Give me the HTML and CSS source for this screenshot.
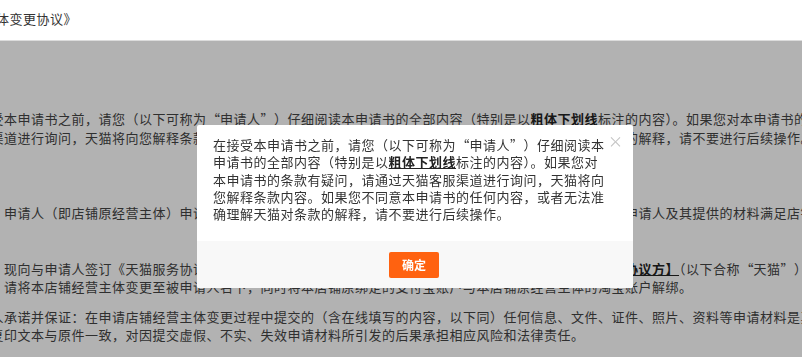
FILE: index.html
```html
<!DOCTYPE html>
<html lang="zh-CN">
<head>
    <meta charset="UTF-8">
    <meta name="viewport" content="width=device-width, initial-scale=1.0">
    <title>店铺经营主体变更</title>
    <link rel="stylesheet" href="styles.css">
</head>
<body>
    <div class="page">
        <div class="header">
            <h1 class="title">《天猫店铺经营主体变更协议》</h1>
        </div>
        <div class="doc">
            <p class="para para-intro">在接受本申请书之前，请您（以下可称为<span class="lq">“</span>申请人<span class="rq">”</span>）仔细阅读本申请书的全部内容（特别是以<b class="key">粗体下划线</b>标注的内容）。如果您对本申请书的条款有疑问，请通过天猫<br>客服渠道进行询问，天猫将向您解释条款内容。如果您不同意本申请书的任何内容，或无法准确理解天猫对条款的解释，请不要进行后续操作。</p>
            <p class="para para-apply">鉴于：申请人（即店铺原经营主体）申请将其经营的天猫店铺之经营主体变更为被申请人，且已经审核并确认被申请人及其提供的材料满足店铺经营主体变更条件。</p>
            <p class="para para-sign">特此，现向与申请人签订《天猫服务协议》的天猫平台经营者，即浙江天猫网络有限公司、支付宝及<b class="key">【天猫服务协议方】</b>（以下合称<span class="lq">“</span>天猫<span class="rq">”</span>）申请：<br>申请：请将本店铺经营主体变更至被申请人名下，同时将本店铺原绑定的支付宝账户与本店铺原经营主体的淘宝账户解绑。</p>
            <p class="para para-promise">申请人承诺并保证：在申请店铺经营主体变更过程中提交的（含在线填写的内容，以下同）任何信息、文件、证件、照片、资料等申请材料是真实、准确、完整、有效<br>的，复印文本与原件一致，对因提交虚假、不实、失效申请材料所引发的后果承担相应风险和法律责任。</p>
        </div>
    </div>

    <div class="mask">
        <div class="dialog">
            <span class="dialog-close">×</span>
            <div class="dialog-body">
                在接受本申请书之前，请您（以下可称为<span class="lq">“</span>申请人<span class="rq">”</span>）仔细阅读本申请书的全部内容（特别是以<b class="key">粗体下划线</b>标注的内容）。如果您对本申请书的条款有疑问，请通过天猫客服渠道进行询问，天猫将向您解释条款内容。如果您不同意本申请书的任何内容，或者无法准确理解天猫对条款的解释，请不要进行后续操作。
            </div>
            <div class="dialog-footer">
                <button class="btn-ok">确定</button>
            </div>
        </div>
    </div>
</body>
</html>
```

FILE: styles.css
```css
html, body {
    margin: 0;
    height: 100%;
    overflow: hidden;
    background: #fff;
    font-family: "Noto Sans CJK SC", "Liberation Sans", sans-serif;
    color: #444;
}
.header {
    height: 40px;
    border-bottom: 1px solid #dcdcdc;
}
.title {
    margin: 0 0 0 -112px;
    font-size: 13px;
    font-weight: normal;
    letter-spacing: 0.5px;
    line-height: 38px;
    color: #333;
    white-space: nowrap;
}
.doc {
    margin-left: -36.5px;
    padding-top: 68px;
    font-size: 13px;
    letter-spacing: 0.5px;
    line-height: 18px;
    white-space: nowrap;
}
.para {
    margin: 0;
}
.para-intro {
    line-height: 19px;
}
.para-apply {
    margin-top: 57px;
}
.para-sign {
    margin-top: 38px;
}
.para-promise {
    margin-top: 12px;
}
/* quotes drawn full width, like the other CJK punctuation */
.lq,
.rq {
    display: inline-block;
    width: 13.5px;
    letter-spacing: 0;
}
.lq {
    text-align: right;
}
.rq {
    text-align: left;
}
.key {
    font-weight: bold;
    text-decoration: underline;
    color: #222;
}
.mask {
    position: fixed;
    top: 41px;
    left: 0;
    right: 0;
    bottom: 0;
    background: rgba(0, 0, 0, 0.3);
}
.dialog {
    position: absolute;
    left: 197px;
    top: 84px;
    width: 436px;
    height: 163px;
    background: #fff;
    border-radius: 2px;
    overflow: hidden;
}
.dialog-close {
    position: absolute;
    top: 8px;
    right: 10px;
    font-size: 15px;
    line-height: 15px;
    color: #c4c4c4;
}
.dialog-body {
    height: 105px;
    padding: 11px 16px 0;
    width: 398px;
    font-size: 13px;
    letter-spacing: 0.5px;
    line-height: 17.3px;
    color: #333;
}
.dialog-footer {
    height: 47px;
    background: #f8f8f8;
    display: flex;
    justify-content: center;
    align-items: center;
}
.btn-ok {
    width: 50px;
    height: 26px;
    margin-left: -2px;
    border: none;
    border-radius: 2px;
    background: #ff6210;
    color: #fff;
    font-family: inherit;
    font-size: 12px;
    font-weight: bold;
    padding: 0;
}
```
